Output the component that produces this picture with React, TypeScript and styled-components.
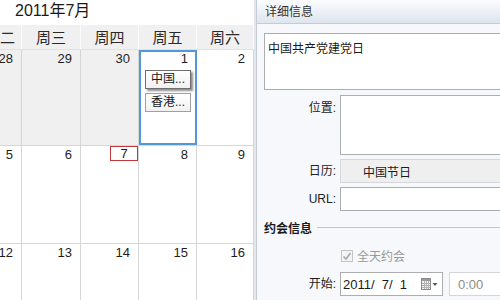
import React from "react";
import styled, { createGlobalStyle } from "styled-components";

const GlobalStyle = createGlobalStyle`
  html, body {
    margin: 0;
    padding: 0;
    width: 500px;
    height: 300px;
    overflow: hidden;
    background: #ffffff;
    font-family: "Liberation Sans", "Noto Sans CJK SC", sans-serif;
    color: #222;
  }
`;

const Window = styled.div`
  display: flex;
  width: 500px;
  height: 300px;
  overflow: hidden;
`;

const CalendarPane = styled.div`
  width: 254px;
  flex: none;
  display: flex;
  flex-direction: column;
  overflow: hidden;
`;

const MonthTitle = styled.div`
  flex: none;
  height: 25px;
  line-height: 22px;
  padding-left: 15px;
  font-size: 16px;
  color: #1a1a1a;
`;

const COLUMNS = "22px 59px 58px 58px 57px";

const HeaderRow = styled.div`
  flex: none;
  display: grid;
  grid-template-columns: ${COLUMNS};
  height: 25px;
  background: #f0f0f0;
  border-bottom: 1px solid #e2e2e2;
  box-sizing: border-box;
`;

const HeaderCell = styled.div<{ $clipped?: boolean }>`
  display: flex;
  justify-content: ${({ $clipped }) => ($clipped ? "flex-end" : "center")};
  padding-right: ${({ $clipped }) => ($clipped ? "6px" : "0")};
  border-right: 1px solid #fbfbfb;
  font-size: 15px;
  line-height: 25px;
  white-space: nowrap;
  overflow: hidden;
  color: #2a2a2a;
`;

const WeekRow = styled.div<{ $height: number }>`
  display: grid;
  grid-template-columns: ${COLUMNS};
  height: ${({ $height }) => $height}px;
  border-bottom: 1px solid #d6d6d6;
  box-sizing: border-box;
  flex: none;
`;

const DayCell = styled.div<{ $other?: boolean; $selected?: boolean }>`
  position: relative;
  border-right: 1px solid #d6d6d6;
  background: ${({ $other }) => ($other ? "#f0f0f0" : "#ffffff")};
  outline: ${({ $selected }) => ($selected ? "2px solid #5497d6" : "none")};
  outline-offset: -2px;
  overflow: hidden;
  z-index: ${({ $selected }) => ($selected ? 1 : 0)};
`;

const DayNumber = styled.div<{ $today?: boolean }>`
  display: flex;
  justify-content: flex-end;
  height: 18px;
  line-height: 18px;
  padding-right: ${({ $today }) => ($today ? "0" : "8px")};
  font-size: 13px;
  color: #1e1e1e;
`;

const TodayMark = styled.span`
  display: block;
  width: 28px;
  height: 15px;
  box-sizing: border-box;
  border: 1px solid #c0393c;
  line-height: 13px;
  text-align: center;
`;

const EventList = styled.div`
  display: flex;
  flex-direction: column;
  gap: 4px;
  padding: 2px 0 0 6px;
`;

const EventChip = styled.div<{ $focused?: boolean }>`
  width: 46px;
  height: 19px;
  box-sizing: border-box;
  border: 1px solid ${({ $focused }) => ($focused ? "#6e6e6e" : "#a0a0a0")};
  background: linear-gradient(#ffffff, #f1f1f1);
  box-shadow: ${({ $focused }) =>
    $focused ? "2px 2px 2px rgba(0, 0, 0, 0.45)" : "none"};
  font-size: 12px;
  line-height: 17px;
  padding-left: 5px;
  white-space: nowrap;
  overflow: hidden;
  color: #1a1a1a;
`;

const Divider = styled.div`
  width: 2px;
  flex: none;
  background: #e4e7eb;
`;

const DetailPane = styled.div`
  flex: 1;
  min-width: 0;
  display: flex;
  flex-direction: column;
  background: #f6f8fb;
  border-left: 1px solid #c6ccd4;
  overflow: hidden;
`;

const PaneHeader = styled.div`
  flex: none;
  height: 24px;
  box-sizing: border-box;
  padding-left: 8px;
  line-height: 24px;
  font-size: 12px;
  color: #333;
  background: linear-gradient(#fbfcfe, #dee5ee);
  border-bottom: 1px solid #c4ccd6;
`;

const PaneBody = styled.div`
  padding: 9px 0 0 7px;
  display: flex;
  flex-direction: column;
`;

const TitleBox = styled.div`
  height: 57px;
  box-sizing: border-box;
  margin-right: -20px;
  border: 1px solid #abadb3;
  background: #fff;
  padding: 7px 3px;
  font-size: 12px;
  line-height: 17px;
  color: #1a1a1a;
`;

const FormGrid = styled.div`
  display: grid;
  grid-template-columns: 72px 1fr;
  column-gap: 4px;
  row-gap: 4px;
  margin-top: 5px;
`;

const Label = styled.div<{ $top?: boolean }>`
  display: flex;
  justify-content: flex-end;
  align-items: ${({ $top }) => ($top ? "flex-start" : "center")};
  padding-top: ${({ $top }) => ($top ? "5px" : "0")};
  font-size: 12px;
  line-height: 16px;
  color: #222;
`;

const Field = styled.div<{ $height: number; $readonly?: boolean }>`
  height: ${({ $height }) => $height}px;
  box-sizing: border-box;
  margin-right: -20px;
  border: 1px solid ${({ $readonly }) => ($readonly ? "#d4d6da" : "#abadb3")};
  background: ${({ $readonly }) => ($readonly ? "#efefef" : "#ffffff")};
  display: flex;
  align-items: center;
  padding-left: 22px;
  font-size: 12px;
  color: #1a1a1a;
`;

const SectionHeader = styled.div`
  height: 32px;
  display: flex;
  align-items: center;
  gap: 5px;
  font-size: 12px;
  font-weight: bold;
  color: #1a1a1a;
`;

const SectionLine = styled.div`
  flex: 1;
  height: 1px;
  background: #c2c6cc;
`;

const CheckRow = styled.div`
  height: 25px;
  display: flex;
  align-items: center;
  gap: 4px;
  padding-left: 77px;
  font-size: 12px;
  color: #9a9a9a;
`;

const CheckBox = styled.span`
  width: 12px;
  height: 12px;
  box-sizing: border-box;
  border: 1px solid #c4c4c4;
  background: #f4f4f4;
  display: flex;
  align-items: center;
  justify-content: center;
`;

const StartRow = styled.div`
  display: grid;
  grid-template-columns: 72px 103px 1fr;
  column-gap: 4px;
  margin-top: 4px;
`;

const DateField = styled.div`
  height: 24px;
  box-sizing: border-box;
  border: 1px solid #abadb3;
  background: #fff;
  display: flex;
  align-items: center;
  padding: 0 4px 0 2px;
  font-size: 13px;
  color: #1a1a1a;
  white-space: pre;
`;

const DateText = styled.span`
  flex: 1;
`;

const TimeField = styled.div`
  height: 24px;
  box-sizing: border-box;
  margin-left: 2px;
  margin-right: -20px;
  border: 1px solid #d4d6da;
  background: #fff;
  display: flex;
  align-items: center;
  padding-left: 8px;
  font-size: 13px;
  color: #8c8c8c;
`;

const CalendarIcon = () => (
  <svg width="17" height="12" viewBox="0 0 17 12">
    <rect x="0.5" y="0.5" width="9" height="11" fill="#f4f4f4" stroke="#8a8a8a" />
    <rect x="1" y="1" width="8" height="2" fill="#9a9a9a" />
    <path
      d="M1 5.5h8M1 7.5h8M1 9.5h8M3.5 3v8M5.5 3v8M7.5 3v8"
      stroke="#b4b4b4"
      strokeWidth="1"
    />
    <path d="M11.5 5h5l-2.5 3z" fill="#555" />
  </svg>
);

type Day = {
  n: number;
  other?: boolean;
  selected?: boolean;
  today?: boolean;
  events?: string[];
};

const weeks: { height: number; days: Day[] }[] = [
  {
    height: 96,
    days: [
      { n: 28, other: true },
      { n: 29, other: true },
      { n: 30, other: true },
      { n: 1, selected: true, events: ["中国...", "香港..."] },
      { n: 2 },
    ],
  },
  {
    height: 98,
    days: [{ n: 5 }, { n: 6 }, { n: 7, today: true }, { n: 8 }, { n: 9 }],
  },
  {
    height: 80,
    days: [{ n: 12 }, { n: 13 }, { n: 14 }, { n: 15 }, { n: 16 }],
  },
];

const App = () => {
  return (
    <Window>
      <GlobalStyle />
      <CalendarPane>
        <MonthTitle>2011年7月</MonthTitle>
        <HeaderRow>
          <HeaderCell $clipped>周二</HeaderCell>
          <HeaderCell>周三</HeaderCell>
          <HeaderCell>周四</HeaderCell>
          <HeaderCell>周五</HeaderCell>
          <HeaderCell>周六</HeaderCell>
        </HeaderRow>
        {weeks.map((week, i) => (
          <WeekRow key={i} $height={week.height}>
            {week.days.map((day) => (
              <DayCell key={day.n} $other={day.other} $selected={day.selected}>
                <DayNumber $today={day.today}>
                  {day.today ? <TodayMark>{day.n}</TodayMark> : day.n}
                </DayNumber>
                {day.events && (
                  <EventList>
                    {day.events.map((ev, j) => (
                      <EventChip key={ev} $focused={j === 0}>
                        {ev}
                      </EventChip>
                    ))}
                  </EventList>
                )}
              </DayCell>
            ))}
          </WeekRow>
        ))}
      </CalendarPane>
      <Divider />
      <DetailPane>
        <PaneHeader>详细信息</PaneHeader>
        <PaneBody>
          <TitleBox>中国共产党建党日</TitleBox>
          <FormGrid>
            <Label $top>位置:</Label>
            <Field $height={60} />
            <Label>日历:</Label>
            <Field $height={24} $readonly>
              中国节日
            </Field>
            <Label>URL:</Label>
            <Field $height={24} />
          </FormGrid>
          <SectionHeader>
            约会信息
            <SectionLine />
          </SectionHeader>
          <CheckRow>
            <CheckBox>
              <svg width="10" height="10" viewBox="0 0 10 10">
                <path d="M1.5 5.5l2.5 2.5 4.5-6" fill="none" stroke="#a8a8a8" strokeWidth="1.6" />
              </svg>
            </CheckBox>
            全天约会
          </CheckRow>
          <StartRow>
            <Label>开始:</Label>
            <DateField>
              <DateText>{"2011/  7/  1"}</DateText>
              <CalendarIcon />
            </DateField>
            <TimeField>0:00</TimeField>
          </StartRow>
        </PaneBody>
      </DetailPane>
    </Window>
  );
};

export default App;
